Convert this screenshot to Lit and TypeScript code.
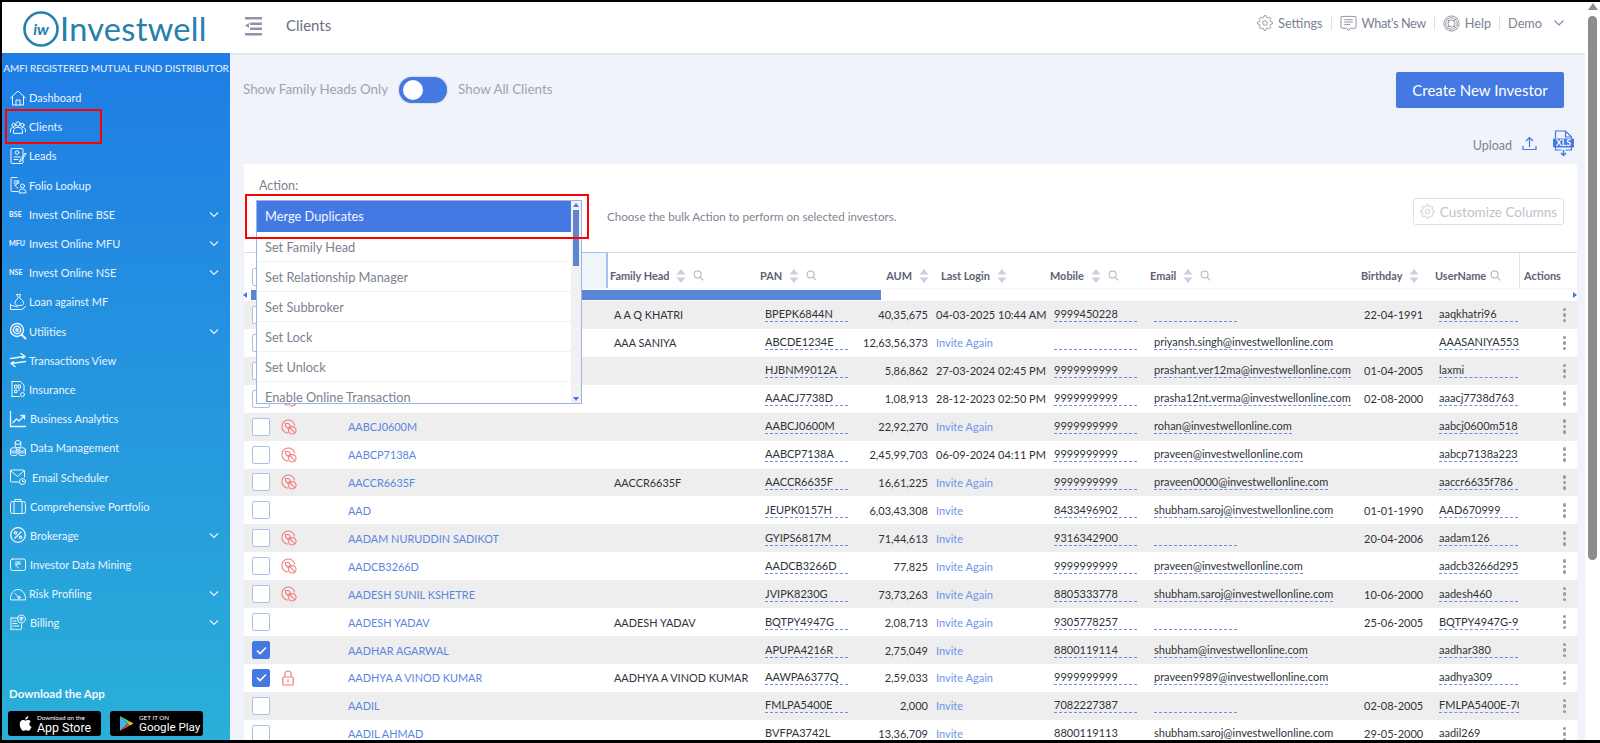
import { LitElement, html, css, svg } from "lit";
import { customElement } from "lit/decorators.js";

type Row = [string, string, string, string, string, string, string, string, string, string, number];

const W = "investwellonline.com";
const rows: Row[] = [
  ["", "A A Q KHATRI", "BPEPK6844N", "40,35,675", "04-03-2025 10:44 AM", "9999450228", "", "22-04-1991", "aaqkhatri96", "", 0],
  ["", "AAA SANIYA", "ABCDE1234E", "12,63,56,373", "Invite Again", "", `priyansh.singh@${W}`, "", "AAASANIYA5539", "", 0],
  ["", "", "HJBNM9012A", "5,86,862", "27-03-2024 02:45 PM", "9999999999", `prashant.ver12ma@${W}`, "01-04-2005", "laxmi", "", 0],
  ["", "", "AAACJ7738D", "1,08,913", "28-12-2023 02:50 PM", "9999999999", `prasha12nt.verma@${W}`, "02-08-2000", "aaacj7738d763", "no", 0],
  ["AABCJ0600M", "", "AABCJ0600M", "22,92,270", "Invite Again", "9999999999", `rohan@${W}`, "", "aabcj0600m518", "no", 0],
  ["AABCP7138A", "", "AABCP7138A", "2,45,99,703", "06-09-2024 04:11 PM", "9999999999", `praveen@${W}`, "", "aabcp7138a223", "no", 0],
  ["AACCR6635F", "AACCR6635F", "AACCR6635F", "16,61,225", "Invite Again", "9999999999", `praveen0000@${W}`, "", "aaccr6635f786", "no", 0],
  ["AAD", "", "JEUPK0157H", "6,03,43,308", "Invite", "8433496902", `shubham.saroj@${W}`, "01-01-1990", "AAD670999", "", 0],
  ["AADAM NURUDDIN SADIKOT", "", "GYIPS6817M", "71,44,613", "Invite", "9316342900", "", "20-04-2006", "aadam126", "no", 0],
  ["AADCB3266D", "", "AADCB3266D", "77,825", "Invite Again", "9999999999", `praveen@${W}`, "", "aadcb3266d295", "no", 0],
  ["AADESH SUNIL KSHETRE", "", "JVIPK8230G", "73,73,263", "Invite Again", "8805333778", `shubham.saroj@${W}`, "10-06-2000", "aadesh460", "no", 0],
  ["AADESH YADAV", "AADESH YADAV", "BQTPY4947G", "2,08,713", "Invite Again", "9305778257", "", "25-06-2005", "BQTPY4947G-93", "", 0],
  ["AADHAR AGARWAL", "", "APUPA4216R", "2,75,049", "Invite", "8800119114", `shubham@${W}`, "", "aadhar380", "", 1],
  ["AADHYA A VINOD KUMAR", "AADHYA A VINOD KUMAR", "AAWPA6377Q", "2,59,033", "Invite Again", "9999999999", `praveen9989@${W}`, "", "aadhya309", "lock", 1],
  ["AADIL", "", "FMLPA5400E", "2,000", "Invite", "7082227387", "", "02-08-2005", "FMLPA5400E-70", "", 0],
  ["AADIL AHMAD", "", "BVFPA3742L", "13,36,709", "Invite", "8800119113", `shubham.saroj@${W}`, "29-05-2000", "aadil269", "", 0],
];

const ic = (body: unknown) =>
  html`<svg class="nav-ic" viewBox="0 0 18 18" fill="none" stroke="currentColor" stroke-width="1" stroke-linecap="round" stroke-linejoin="round">${body}</svg>`;

const icons: Record<string, unknown> = {
  home: ic(svg`<path d="M1.500 9 9 2l7.500 7M3.500 7.500V16h11V7.500M7 16v-5h4v5"/>`),
  clients: ic(svg`<circle cx="9" cy="6" r="2.200"/><circle cx="4.600" cy="7" r="1.700"/><circle cx="13.400" cy="7" r="1.700"/><path d="M1.500 14v-2c0-1.600 1.300-2.600 3-2.600M16.500 14v-2c0-1.600-1.300-2.600-3-2.600M4.500 15v-2.400c0-2 2-3.300 4.500-3.300s4.500 1.300 4.500 3.300V15z"/>`),
  leads: ic(svg`<rect x="2" y="1.500" width="12" height="15" rx="1"/><circle cx="8" cy="5.500" r="1.800"/><path d="M5 10h6M5 12.500h4M17 7l-5 7-1.500 1 .3-1.800 5-6.800z"/>`),
  folio: ic(svg`<path d="M8 1.500H3a1 1 0 0 0-1 1v12a1 1 0 0 0 1 1h6M5 5h5M5 7h5M9 5c0 3-1 4-3.500 4L9 12.500"/><circle cx="13.500" cy="10" r="2"/><path d="M10 16.500c0-2.500 1.500-3.500 3.500-3.500s3.500 1 3.500 3.500z"/>`),
  loan: ic(svg`<path d="M8 1.500h3.500L10.500 5c2.500 1.500 4 3.500 4 5.500 0 1.500-2 2-4.500 2s-4-.5-4-2c0-2 1.500-4 3-5.500z"/><path d="M1.500 11v5.500H13l3.500-3M1.500 12.500c3 -.5 4 1.500 7 1.500"/>`),
  util: ic(svg`<g stroke-width="1.400"><circle cx="8" cy="8" r="6.500"/><circle cx="8" cy="8" r="3.700"/><circle cx="8" cy="8" r="1.200"/><path d="m12.500 12.500 4 4" stroke-width="2"/></g>`),
  trans: ic(svg`<g stroke-width="1.500"><path d="M1.500 7.500 15.500 5.500M12 2.500l4 3-2.500 1.500M16.500 10.500l-14 2M6 15.500l-4-3 2.500-1.500"/></g>`),
  ins: ic(svg`<path d="M3 1.500h8.500L15 5v6M10 16.500H3zM3 1.500v15"/><path d="M6 5h2v3H6zM9.500 5h2v3h-2zM6 10h2v2.500H6zM9.500 10h1"/><circle cx="13.500" cy="14.500" r="2"/>`),
  biz: ic(svg`<g stroke-width="1.300"><path d="M1.500 1.500v15h15"/><path d="m4 12.500 3.500-3.500 2.500 2 5-5M12 5.500h3.500V9"/></g>`),
  data: ic(svg`<ellipse cx="9" cy="3.500" rx="2.800" ry="2"/><path d="M6.200 3.500v4.500c0 1 5.600 1 5.600 0V3.500"/><ellipse cx="4.800" cy="10.500" rx="3.300" ry="1.800"/><path d="M1.500 10.500v5c0 1.400 6.600 1.400 6.600 0v-5M1.500 13c0 1.400 6.600 1.400 6.600 0"/><ellipse cx="13.200" cy="10.500" rx="3.300" ry="1.800"/><path d="M9.900 10.500v5c0 1.400 6.600 1.400 6.600 0v-5M9.900 13c0 1.400 6.600 1.400 6.600 0"/>`),
  mail: ic(svg`<path d="M9.500 14H2.500a1 1 0 0 1-1-1V3a1 1 0 0 1 1-1h12a1 1 0 0 1 1 1v6"/><path d="m2 3 6.500 5.500L15 3"/><circle cx="13.500" cy="13.500" r="3"/><path d="M13.500 12v1.500h1.300"/>`),
  port: ic(svg`<rect x="1.500" y="4.500" width="15" height="12" rx="2"/><path d="M6 4.500V2.500h6v2M5 4.500v12M13 4.500v12"/>`),
  brok: ic(svg`<circle cx="9" cy="9" r="7.300" stroke-width="1.300"/><path d="m6 12 6-6" stroke-width="1.300"/><circle cx="6.500" cy="6.800" r="1.200" stroke-width="1.200"/><circle cx="11.500" cy="11.300" r="1.200" stroke-width="1.200"/>`),
  mine: ic(svg`<rect x="1.500" y="3" width="15" height="11.500" rx="2"/><path d="M6.500 6h5M6.500 8h5M9 6c1.500 1.500 0 3-2.500 3L9.500 12"/>`),
  risk: ic(svg`<path d="M1.500 14.500C1 9 4.500 4.500 9 4.500s8 4.500 7.500 10zM6 8.500l3.500 3.500"/><circle cx="10" cy="12.500" r="1.200"/>`),
  bill: ic(svg`<path d="M2 4h7M2 4v12l1.500-1 1.500 1 1.500-1 1.500 1 1.500-1 1.500 1 1.500-1V10M4 7h3M4 9.500h4M4 12h6"/><circle cx="12.500" cy="5" r="4"/><path d="M11 3.500h3M11 5h3M12.500 3.500c1 1 .5 2-1.500 2l2 2"/>`),
};

type Nav = { label: string; icon?: string; tag?: string; more?: boolean; shift?: string };
const nav: Nav[] = [
  { label: "Dashboard", icon: "home" },
  { label: "Clients", icon: "clients" },
  { label: "Leads", icon: "leads" },
  { label: "Folio Lookup", icon: "folio" },
  { label: "Invest Online BSE", tag: "BSE", more: true },
  { label: "Invest Online MFU", tag: "MFU", more: true },
  { label: "Invest Online NSE", tag: "NSE", more: true },
  { label: "Loan against MF", icon: "loan" },
  { label: "Utilities", icon: "util", more: true },
  { label: "Transactions View", icon: "trans" },
  { label: "Insurance", icon: "ins" },
  { label: "Business Analytics", icon: "biz", shift: "s1" },
  { label: "Data Management", icon: "data", shift: "s1" },
  { label: "Email Scheduler", icon: "mail", shift: "s3" },
  { label: "Comprehensive Portfolio", icon: "port", shift: "s1" },
  { label: "Brokerage", icon: "brok", shift: "s1", more: true },
  { label: "Investor Data Mining", icon: "mine", shift: "s1" },
  { label: "Risk Profiling", icon: "risk", more: true },
  { label: "Billing", icon: "bill", shift: "s1", more: true },
];

const menu = ["Set Family Head", "Set Relationship Manager", "Set Subbroker", "Set Lock", "Set Unlock", "Enable Online Transaction"];

function gearPath(c: number, outer: number, inner: number, teeth: number) {
  const pts: string[] = [];
  for (let i = 0; i < teeth; i++) {
    const step = (Math.PI * 2) / teeth;
    const a = i * step;
    const ang = [a - step * 0.32, a - step * 0.16, a + step * 0.16, a + step * 0.32];
    const rad = [inner, outer, outer, inner];
    ang.forEach((t, k) => pts.push(`${(c + Math.cos(t) * rad[k]).toFixed(2)} ${(c + Math.sin(t) * rad[k]).toFixed(2)}`));
  }
  return "M" + pts.join("L") + "Z";
}

const gear = (size: number) => html`<svg class="top-ic" style="width:${size}px;height:${size}px" viewBox="0 0 18 18" fill="none" stroke="currentColor" stroke-width="1" stroke-linejoin="round"><path d=${gearPath(9, 8.3, 6.4, 8)}/><circle cx="9" cy="9" r="2.600"/></svg>`;

const sort = html`<svg class="sort" viewBox="0 0 10 16"><path d="M5 1 9.500 6.500H.5zM5 15 .5 9.500h9z"/></svg>`;
const search = html`<svg class="search" viewBox="0 0 12 12" fill="none" stroke="currentColor" stroke-width="1.100"><circle cx="5" cy="5" r="3.800"/><path d="m8 8 3.300 3.300"/></svg>`;
const noIcon = html`<svg class="flag" viewBox="0 0 16 16" fill="none" stroke="#f27c7c" stroke-width="1.100"><path d="M7.500 14A6.500 6.500 0 1 1 13.800 6.500"/><path d="M4.500 4.500h3L9.500 7 7 9.500 4.500 7z"/><circle cx="11.300" cy="11.300" r="3.700"/><path d="m8.700 8.700 5.200 5.200"/></svg>`;
const lockIcon = html`<svg class="lock" viewBox="0 0 12 16" fill="none" stroke="#f27c7c" stroke-width="1.200"><path d="M2.800 7V4.200a3.200 3.200 0 0 1 6.400 0V7"/><rect x=".8" y="7" width="10.400" height="8" rx="1"/><path d="M6 9.500v3"/></svg>`;

@customElement("app-root")
export class AppRoot extends LitElement {
  static styles = css`
    :host { display: block; width: 1600px; height: 743px; position: relative; overflow: hidden; background: #000; font-family: Lato, "Open Sans", sans-serif; }
    .shell { height: 738px; margin: 2px 0 0 2px; display: grid; grid-template-columns: 1583px 15px; background: #fff; }
    .content { display: flex; flex-direction: column; min-width: 0; height: 738px; overflow: hidden; }
    .gutter { padding: 1px 0 0 3px; background: #fff; display: flex; flex-direction: column; align-items: flex-start; }
    .gutter i { width: 0; height: 0; border-left: 5px solid transparent; border-right: 5px solid transparent; border-bottom: 7px solid #8d8d8d; }
    .gutter b { display: block; width: 9px; height: 544px; background: #8d8d8d; border-radius: 5px; margin-top: 6px; }

    header { height: 51px; flex: none; display: flex; align-items: center; background: #fff; color: #6f7385; }
    .brand { width: 242px; height: 100%; display: flex; align-items: center; padding: 3px 0 0 21px; box-sizing: border-box; color: #2480ad; }
    .brand svg { width: 36px; height: 36px; flex: none; }
    .brand span { font-size: 32.500px; letter-spacing: .3px; line-height: 36px; margin-left: 1px; }
    .burger { width: 18px; height: 20px; flex: none; margin-bottom: 4px; }
    .page { margin-left: 24px; font-size: 15px; color: #6b6f80; padding-bottom: 6px; }
    .top { margin-left: auto; display: flex; align-items: center; font-size: 12.700px; color: #7b7f90; padding: 0 20px 9px 0; }
    .top span.sep { width: 1px; height: 14px; background: #dfe2ea; margin: 0 8px; }
    .top .news { letter-spacing: -.4px; }
    .top-ic { flex: none; margin-right: 5px; color: #8b8f9d; }
    .chev { margin-left: 11px; width: 12px; height: 8px; color: #7f8ab0; }

    .body { flex: 1; display: flex; min-height: 0; }
    nav { width: 228px; flex: none; background: linear-gradient(180deg, #1f7de5 0%, #2aafd8 100%); color: #e8f3ff; display: flex; flex-direction: column; }
    .amfi { height: 30px; line-height: 30px; text-align: center; font-size: 10px; letter-spacing: -.05px; white-space: nowrap; color: #eaf4ff; }
    .item { height: 29.200px; flex: none; display: flex; align-items: center; padding-left: 7px; font-size: 11px; color: #eaf4ff; }
    .nav-ic { width: 18px; height: 18px; flex: none; color: #eef6ff; }
    .tag { width: 18px; font-size: 7.200px; font-weight: 700; flex: none; color: #eef6ff; white-space: nowrap; }
    .item .t { margin-left: 2px; white-space: nowrap; }
    .item.s1 .t { margin-left: 3px; }
    .item.s3 .t { margin-left: 5px; }
    .more { margin-left: auto; margin-right: 11px; width: 10px; height: 7px; color: #e6f2ff; }
    .foot { margin-top: auto; padding: 0 0 4px 6px; }
    .foot h4 { margin: 0 0 9px 1px; font-size: 11.500px; font-weight: 700; color: #f2f9ff; line-height: 16px; }
    .stores { display: flex; gap: 9px; }
    .store { width: 93px; height: 25px; box-sizing: border-box; background: #000; border-radius: 3px; display: flex; align-items: center; color: #fff; padding-left: 9px; gap: 5px; }
    .store svg { width: 15px; height: 17px; flex: none; }
    .store div { display: flex; flex-direction: column; line-height: 1; white-space: nowrap; }
    .store small { font-size: 6.300px; line-height: 7px; }
    .store strong { font-size: 12.400px; font-weight: 400; line-height: 13px; font-family: Roboto, sans-serif; }
    .store strong.gp { font-size: 11.600px; }

    main { flex: 1; min-width: 0; background: #f0f3f9; border-top: 2px solid #e3e7f1; padding-top: 17px; overflow: hidden; box-sizing: border-box; }
    .bar { height: 36px; display: flex; align-items: center; padding: 0 21px 0 13px; }
    .lbl { font-size: 13.400px; color: #9ea3b1; white-space: nowrap; padding-bottom: 2px; }
    .switch { width: 48px; height: 26px; border-radius: 13px; background: #4478e3; margin: 0 11px; flex: none; display: flex; align-items: center; padding-left: 4px; box-sizing: border-box; box-shadow: 0 0 2px rgba(0,0,0,.3); }
    .switch i { width: 20px; height: 20px; border-radius: 50%; background: #fff; }
    .create { margin-left: auto; width: 168px; height: 36px; background: #4478e3; color: #fff; border-radius: 2px; font-size: 15px; display: flex; align-items: center; justify-content: center; }
    .up { height: 26px; margin-top: 22px; display: flex; align-items: center; justify-content: flex-end; padding-right: 11px; font-size: 12.500px; color: #7f8394; }
    .up > span { padding-top: 4px; }
    .up .arrow { width: 15px; height: 15px; margin: 0 16px 0 10px; color: #4478e3; }
    .up .xls { width: 21px; height: 27px; }
    .card { margin: 8px 8px 0 14px; background: #fff; position: relative; }
    .act { height: 88px; box-sizing: border-box; padding: 14px 13px 0 15px; }
    .act label { display: block; font-size: 12.500px; line-height: 16px; color: #7e8290; }
    .act-row { margin-top: 4px; display: flex; align-items: flex-start; }
    .hint { margin: 12px 0 0 348px; font-size: 11.600px; line-height: 14px; color: #7f8392; white-space: nowrap; }
    .cust { margin-left: auto; width: 151px; height: 27px; box-sizing: border-box; border: 1px solid #dbe0ec; border-radius: 3px; display: flex; align-items: center; justify-content: center; font-size: 13.500px; color: #bfc3cc; white-space: nowrap; }
    .cust .top-ic { color: #c2c6cf; }

    .cols { display: grid; grid-template-columns: 34px 70px 262px 150px 90px 83px 117px 100px 211px 74px 84px 58px; }
    .thead { height: 36px; font-size: 10.900px; font-weight: 700; color: #5d6274; align-items: center; border-top: 1px solid #d8dde8; box-sizing: border-box; box-shadow: 0 1px 2px rgba(0,0,0,.05); position: relative; }
    .thead > div { display: flex; align-items: center; height: 100%; white-space: nowrap; min-width: 0; box-sizing: border-box; padding-top: 10px; }
    .thead .nm { background: #eef5fd; border-right: 2px solid #a9c1ef; border-top: 1px solid #a9c1ef; margin-right: 2px; margin-top: -1px; height: 36px; padding-top: 0; }
    .thead .box { margin-top: 2px; }
    .sort { width: 10px; height: 16px; fill: #c7d2e0; margin-left: 7px; flex: none; }
    .search { width: 11px; height: 11px; margin-left: 7px; flex: none; color: #aab3c6; }
    .thead > .th-aum { justify-content: flex-end; padding-right: 4px; }
    .thead > .th-last { padding-left: 8px; }
    .thead > .th-act { border-left: 1px solid #e1e4ec; padding-left: 4px; }
    .th-user .search { margin-left: 4px; }
    .hs { height: 13px; display: flex; align-items: center; position: relative; }
    .hs b { display: block; width: 630px; height: 10px; background: #5b86d8; margin-left: 4px; }
    .hs i { width: 0; height: 0; border-top: 3px solid transparent; border-bottom: 3px solid transparent; }
    .hs i.l { border-right: 4px solid #4478e3; margin-left: -1px; }
    .hs i.r { border-left: 4px solid #4478e3; margin-left: auto; margin-right: 0; }

    .row { height: 27.930px; align-items: center; font-size: 11px; color: #30323a; background: #fff; }
    .row.odd { background: #eee; }
    .row > div { white-space: nowrap; min-width: 0; display: flex; align-items: center; }
    .box { width: 18px; height: 18px; box-sizing: border-box; border: 1.500px solid #a9bfef; border-radius: 2px; background: #fff; margin-left: 8px; display: flex; align-items: center; justify-content: center; }
    .box.on { background: #4478e3; border-color: #4478e3; }
    .box svg { width: 11px; height: 9px; }
    .flag { width: 16px; height: 16px; margin-left: 3px; }
    .lock { width: 12px; height: 16px; margin-left: 4px; }
    .name { color: #5a86e0; font-size: 10.900px; }
    .fam { padding-left: 4px; font-size: 10.900px; }
    .dash { display: inline-block; box-sizing: border-box; min-width: 83px; height: 15px; line-height: 14px; border-bottom: 1px dashed #6c8fe8; overflow: hidden; }
    .c-pan { padding-left: 5px; }
    .c-aum { justify-content: flex-end; padding-right: 5px; }
    .c-last { padding-left: 3px; }
    .inv { color: #6f94ea; }
    .c-mob, .c-mail, .c-user { padding-left: 4px; }
    .c-bd { padding-left: 3px; }
    .c-user .dash { min-width: 79px; max-width: 81px; }
    .c-act { justify-content: flex-end; padding-right: 11px; }
    .dots { display: flex; flex-direction: column; gap: 2px; }
    .dots i { width: 3.500px; height: 3.500px; border-radius: 50%; background: #9a9a9a; }

    .dd { position: absolute; left: 12px; top: 36px; width: 326px; height: 204px; box-sizing: border-box; border: 1px solid #9db4e6; background: #fff; display: grid; grid-template-columns: 1fr 10px; z-index: 3; overflow: hidden; }
    .dd-list { min-width: 0; overflow: hidden; }
    .dd-first { height: 31px; background: #4478e3; color: #f2f6ff; font-size: 12.800px; line-height: 31px; padding-left: 8px; }
    .dd-item { height: 30px; box-sizing: border-box; border-bottom: 1px solid #edf1f8; padding-left: 8px; font-size: 12.800px; line-height: 30px; color: #7d8190; white-space: nowrap; }
    .dd-bar { background: #f1f1f1; display: flex; flex-direction: column; align-items: center; padding: 2px 0; box-sizing: border-box; }
    .dd-bar b { display: block; width: 6px; height: 56px; background: #6184cf; margin-top: 3px; }
    .dd-bar i { width: 0; height: 0; border-left: 3.500px solid transparent; border-right: 3.500px solid transparent; }
    .dd-bar i.u { border-bottom: 4px solid #4478e3; }
    .dd-bar i.d { border-top: 4px solid #4478e3; margin-top: auto; }

    .mark { position: absolute; box-sizing: border-box; border: 2px solid #f00; pointer-events: none; z-index: 5; }
    .m1 { left: 5px; top: 109px; width: 97px; height: 35px; }
    .m2 { left: 1px; top: 30px; width: 344px; height: 45px; }
  `;

  private cell(cls: string, v: string) {
    return html`<div class=${cls}><span class="dash">${v}</span></div>`;
  }

  render() {
    return html`
      <div class="shell">
        <div class="content">
          <header>
            <div class="brand">
              <svg viewBox="0 0 36 36">
                <circle cx="18" cy="18" r="16.500" fill="none" stroke="#2480ad" stroke-width="2.600"/>
                <text x="18" y="23.500" text-anchor="middle" font-family="Lato, sans-serif" font-size="16" font-weight="700" font-style="italic" fill="#2480ad">iw</text>
              </svg>
              <span>Investwell</span>
            </div>
            <svg class="burger" viewBox="0 0 18 20" fill="#8f94a8">
              <rect x="1" y="1" width="17" height="2.500"/><rect x="6" y="6.500" width="12" height="2.500"/><rect x="6" y="11.500" width="12" height="2.500"/><rect x="1" y="17" width="17" height="2.500"/>
              <path d="M1 9.500 5 7v5z"/>
            </svg>
            <span class="page">Clients</span>
            <div class="top">
              ${gear(16)}<span>Settings</span><span class="sep"></span>
              <svg class="top-ic" style="width:17px;height:17px" viewBox="0 0 18 18" fill="none" stroke="currentColor" stroke-width="1"><path d="M2 1.500h14a1 1 0 0 1 1 1V13a1 1 0 0 1-1 1h-5l-2 2.500L7 14H2a1 1 0 0 1-1-1V2.500a1 1 0 0 1 1-1z"/><path d="M4.500 5h9M4.500 7.500h9M4.500 10h6"/></svg>
              <span class="news">What's New</span><span class="sep"></span>
              <svg class="top-ic" style="width:17px;height:17px" viewBox="0 0 18 18" fill="none" stroke="currentColor" stroke-width="1"><circle cx="9" cy="9" r="8"/><circle cx="9" cy="9" r="6"/><circle cx="9" cy="9" r="3.700"/><path d="m3.500 3.500 3 3M14.500 3.500l-3 3M3.500 14.500l3-3M14.500 14.500l-3-3"/></svg>
              <span>Help</span><span class="sep"></span>
              <span>Demo</span>
              <svg class="chev" viewBox="0 0 12 8" fill="none" stroke="currentColor" stroke-width="1.200"><path d="m1.500 1.500 4.500 4.500 4.500-4.500"/></svg>
            </div>
          </header>
          <div class="body">
            <nav>
              <div class="amfi">AMFI REGISTERED MUTUAL FUND DISTRIBUTOR</div>
              ${nav.map((n) => html`
                <div class="item ${n.shift ?? ""}">
                  ${n.tag ? html`<span class="tag">${n.tag}</span>` : icons[n.icon!]}
                  <span class="t">${n.label}</span>
                  ${n.more ? html`<svg class="more" viewBox="0 0 10 7" fill="none" stroke="currentColor" stroke-width="1.200"><path d="m1 1.500 4 4 4-4"/></svg>` : ""}
                </div>`)}
              <div class="foot">
                <h4>Download the App</h4>
                <div class="stores">
                  <div class="store">
                    <svg viewBox="0 0 15 17" fill="#fff"><path d="M12.300 9c0-1.700 1.400-2.500 1.500-2.600-.8-1.200-2.100-1.300-2.500-1.400-1.100-.1-2.100.6-2.700.6-.5 0-1.400-.6-2.300-.6C5 5 3.900 5.700 3.300 6.700 2 8.900 3 12.200 4.200 14c.6.900 1.300 1.900 2.300 1.800.9 0 1.300-.6 2.400-.6s1.400.6 2.400.6 1.600-.9 2.200-1.800c.7-1 1-2 1-2.100-.1 0-2.200-.8-2.200-2.900zM10.500 3.600c.5-.6.800-1.400.7-2.300-.7 0-1.600.5-2.100 1.100-.5.5-.9 1.400-.8 2.200.8.100 1.600-.4 2.200-1z"/></svg>
                    <div><small>Download on the</small><strong>App Store</strong></div>
                  </div>
                  <div class="store">
                    <svg viewBox="0 0 15 17"><path d="M1 1v15l7.500-7.500z" fill="#3bb6f0"/><path d="M1 1l10 5.500-2.500 2z" fill="#3ddc84"/><path d="M1 16l10-5.500-2.500-2z" fill="#ea4335"/><path d="M11 6.500 14.500 8.500 11 10.500 8.500 8.500z" fill="#fbbc04"/></svg>
                    <div><small>GET IT ON</small><strong class="gp">Google Play</strong></div>
                  </div>
                </div>
              </div>
            </nav>
            <main>
              <div class="bar">
                <span class="lbl">Show Family Heads Only</span>
                <div class="switch"><i></i></div>
                <span class="lbl">Show All Clients</span>
                <div class="create">Create New Investor</div>
              </div>
              <div class="up">
                <span>Upload</span>
                <svg class="arrow" viewBox="0 0 15 15" fill="none" stroke="currentColor" stroke-width="1.200"><path d="M7.500 11V1.500M4 5l3.500-3.500L11 5M1 10v3.500h13V10"/></svg>
                <svg class="xls" viewBox="0 0 21 27" fill="none" stroke="#4478e3" stroke-width="1.200">
                  <path d="M2.500 8V1h10l6 6v1M2.500 17v3h6M18.500 17v3h-6"/><path d="M12.500 1v6h6"/>
                  <rect x="0" y="8.500" width="21" height="9" rx="1" fill="#4478e3" stroke="none"/>
                  <text x="10.500" y="16" text-anchor="middle" font-family="Lato, sans-serif" font-size="8.500" font-weight="700" fill="#fff" stroke="none">XLS</text>
                  <path d="M10.500 20v5M8 23l2.500 2.500L13 23" stroke-width="1.500"/>
                </svg>
              </div>
              <div class="card">
                <div class="act">
                  <label>Action:</label>
                  <div class="act-row">
                    <span class="hint">Choose the bulk Action to perform on selected investors.</span>
                    <div class="cust">${gear(15)}Customize Columns</div>
                  </div>
                </div>
                <div class="dd">
                  <div class="dd-list">
                    <div class="dd-first">Merge Duplicates</div>
                    ${menu.map((m) => html`<div class="dd-item">${m}</div>`)}
                  </div>
                  <div class="dd-bar"><i class="u"></i><b></b><i class="d"></i></div>
                </div>
                <div class="mark m2"></div>
                <div class="cols thead">
                  <div><span class="box"></span></div><div></div><div class="nm"></div>
                  <div>Family Head${sort}${search}</div>
                  <div>PAN${sort}${search}</div>
                  <div class="th-aum">AUM${sort}</div>
                  <div class="th-last">Last Login${sort}</div>
                  <div>Mobile${sort}${search}</div>
                  <div>Email${sort}${search}</div>
                  <div>Birthday${sort}</div>
                  <div class="th-user">UserName${search}</div>
                  <div class="th-act">Actions</div>
                </div>
                <div class="hs"><i class="l"></i><b></b><i class="r"></i></div>
                ${rows.map((r, i) => html`
                  <div class="cols row ${i % 2 === 0 ? "odd" : ""}">
                    <div><span class="box ${r[10] ? "on" : ""}">${r[10] ? html`<svg viewBox="0 0 11 9" fill="none" stroke="#fff" stroke-width="1.600"><path d="m1 4.500 3 3 6-6"/></svg>` : ""}</span></div>
                    <div>${r[9] === "no" ? noIcon : r[9] === "lock" ? lockIcon : ""}</div>
                    <div class="name">${r[0]}</div>
                    <div class="fam">${r[1]}</div>
                    ${this.cell("c-pan", r[2])}
                    <div class="c-aum">${r[3]}</div>
                    <div class="c-last ${r[4].startsWith("Invite") ? "inv" : ""}">${r[4]}</div>
                    ${this.cell("c-mob", r[5])}
                    ${this.cell("c-mail", r[6])}
                    <div class="c-bd">${r[7]}</div>
                    ${this.cell("c-user", r[8])}
                    <div class="c-act"><span class="dots"><i></i><i></i><i></i></span></div>
                  </div>`)}
              </div>
            </main>
          </div>
        </div>
        <div class="gutter"><i></i><b></b></div>
      </div>
      <div class="mark m1"></div>
    `;
  }
}
